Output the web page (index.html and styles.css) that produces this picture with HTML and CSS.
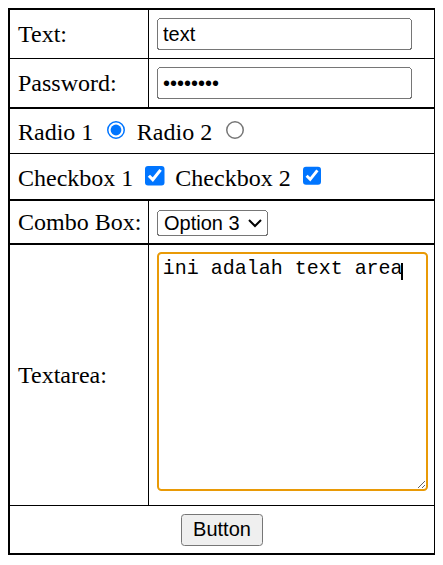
FILE: index.html
```html
<!DOCTYPE html>
<html>
<head>
<meta charset="utf-8">
<link rel="stylesheet" href="styles.css">
</head>
<body>
<form class="form">
<table class="grid">
<tr class="r1"><td class="label">Text:</td><td class="field"><input class="ctl txt" type="text" value="text"></td></tr>
<tr class="r2"><td class="label">Password:</td><td class="field"><input class="ctl txt" type="password" value="12345678"></td></tr>
<tr class="r3 thick"><td colspan="2" class="full">Radio 1 <input class="ctl" type="radio" name="r" checked> Radio 2 <input class="ctl" type="radio" name="r"></td></tr>
<tr class="r4"><td colspan="2" class="full">Checkbox 1 <input class="ctl" type="checkbox" checked> Checkbox 2 <input class="ctl" type="checkbox" checked></td></tr>
<tr class="r5 thick"><td class="label">Combo Box:</td><td class="field"><select class="ctl combo"><option>Option 1</option><option>Option 2</option><option selected>Option 3</option></select></td></tr>
<tr class="r6 thick"><td class="label">Textarea:</td><td class="field"><div class="ta-wrap"><textarea class="ta">ini adalah text area</textarea><span class="caret"></span></div></td></tr>
<tr class="r7"><td colspan="2" class="center"><button class="ctl" type="button">Button</button></td></tr>
</table>
</form>
</body>
</html>
```
FILE: styles.css
```css
body {
  margin: 8px;
  font-family: "Liberation Serif", "Times New Roman", serif;
  font-size: 24px;
  color: #000;
  background: #fff;
}
.form { margin: 0; }
.grid {
  border-collapse: separate;
  border-spacing: 0;
  border: 2px solid #000;
  width: 428px;
  table-layout: fixed;
}
.grid td {
  padding: 0 8px;
  border-top: 1px solid #000;
  vertical-align: middle;
  white-space: nowrap;
}
.grid .r1 td { border-top: 0; }
.grid .thick td { border-top-width: 2px; }
.r1 { height: 48px; }
.r2 { height: 49px; }
.r3 { height: 46px; }
.r4 { height: 46px; }
.r5 { height: 44px; }
.r6 { height: 262px; }
.r7 { height: 48px; }
.grid .label {
  width: 122px;
  border-right: 1px solid #000;
}
.grid .center { text-align: center; }
.ctl {
  zoom: 1.5;
  font-family: "Liberation Sans", Arial, sans-serif;
  font-size: 13.333px;
}
.txt {
  box-sizing: border-box;
  width: 170px;
}
.combo {
  box-sizing: border-box;
  width: 74px;
}
.ta-wrap {
  position: relative;
  padding-bottom: 7px;
}
.ta {
  display: block;
  zoom: 1.5;
  box-sizing: border-box;
  width: 180.667px;
  height: 159.333px;
  margin: 0;
  padding: 2px 2px 2px 2.5px;
  border: 1.4px solid #e99a06;
  border-radius: 3px;
  outline: none;
  font-family: "Liberation Mono", "Courier New", monospace;
  font-size: 13.333px;
  color: #000;
  background: #fff;
}
.caret {
  position: absolute;
  left: 244px;
  top: 11px;
  width: 2px;
  height: 17px;
  background: #000;
}
```
